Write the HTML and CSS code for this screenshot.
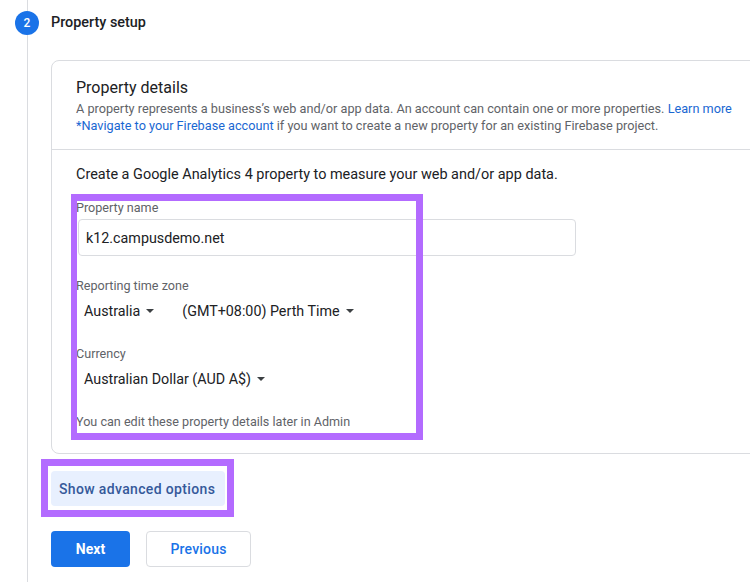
FILE: index.html
```html
<!DOCTYPE html>
<html lang="en">
<head>
<meta charset="utf-8">
<title>Property setup</title>
<link rel="stylesheet" href="styles.css">
</head>
<body>
<div class="stepper">
  <div class="rail">
    <div class="rail-top"></div>
    <div class="step-num">2</div>
    <div class="rail-line"></div>
  </div>
  <div class="main">
    <div class="step-title">Property setup</div>
    <div class="card">
      <div class="card-head">
        <div class="card-title">Property details</div>
        <p class="desc">A property represents a business’s web and/or app data. An account can contain one or more properties. <a class="link">Learn more</a></p>
        <p class="desc"><a class="link">*Navigate to your Firebase account</a> if you want to create a new property for an existing Firebase project.</p>
      </div>
      <div class="card-body">
        <div class="intro">Create a Google Analytics 4 property to measure your web and/or app data.</div>
        <div class="fields">
          <div class="label">Property name</div>
          <div class="input">k12.campusdemo.net</div>
          <div class="label label-gap">Reporting time zone</div>
          <div class="select-row">
            <div class="select">Australia <span class="caret"></span></div>
            <div class="select">(GMT+08:00) Perth Time <span class="caret"></span></div>
          </div>
          <div class="label label-gap2">Currency</div>
          <div class="select-row">
            <div class="select">Australian Dollar (AUD A$) <span class="caret"></span></div>
          </div>
          <div class="label note">You can edit these property details later in Admin</div>
          <div class="highlight highlight-fields"></div>
        </div>
      </div>
    </div>
    <div class="advanced-wrap">
      <button class="advanced">Show advanced options</button>
      <div class="highlight highlight-adv"></div>
    </div>
    <div class="actions">
      <button class="btn btn-primary">Next</button>
      <button class="btn btn-secondary">Previous</button>
    </div>
  </div>
</div>
</body>
</html>
```
FILE: styles.css
```css
html, body {
  margin: 0;
  padding: 0;
  background: #ffffff;
  overflow: hidden;
}
body {
  font-family: Roboto, "Liberation Sans", Arial, sans-serif;
  color: #202124;
  width: 750px;
  height: 582px;
}
.stepper {
  display: grid;
  grid-template-columns: 24px 1fr;
  column-gap: 12px;
  padding-left: 15px;
  height: 582px;
}
.rail {
  display: flex;
  flex-direction: column;
  align-items: flex-start;
}
.rail-top {
  width: 1px;
  height: 11px;
  margin-left: 12px;
  background: #dadce0;
}
.rail-line {
  width: 1px;
  flex: 1;
  margin-left: 12px;
  background: #dadce0;
}
.step-num {
  width: 24px;
  height: 24px;
  border-radius: 50%;
  background: #1a73e8;
  color: #ffffff;
  font-size: 12px;
  font-weight: 500;
  display: flex;
  align-items: center;
  justify-content: center;
}
.main {
  padding-top: 11px;
  min-width: 0;
}
.step-title {
  height: 24px;
  line-height: 24px;
  font-size: 14.4px;
  font-weight: 500;
  color: #202124;
}
.card {
  margin-top: 25px;
  margin-right: -12px;
  border: 1px solid #dadce0;
  border-radius: 8px;
}
.card-head {
  padding: 15px 24px;
  border-bottom: 1px solid #dadce0;
}
.card-title {
  font-size: 16px;
  line-height: 24px;
  color: #202124;
}
.desc {
  margin: 0;
  font-size: 12.7px;
  line-height: 17px;
  color: #5f6368;
  white-space: nowrap;
}
.link {
  color: #1967d2;
  text-decoration: none;
}
.card-body {
  padding: 15px 24px 23px;
}
.intro {
  font-size: 14.45px;
  line-height: 20px;
  color: #202124;
}
.fields {
  position: relative;
  margin-top: 15px;
}
.label {
  font-size: 12.6px;
  line-height: 16px;
  color: #5f6368;
}
.label-gap {
  margin-top: 22px;
}
.label-gap2 {
  margin-top: 18px;
}
.note {
  margin-top: 18px;
}
.input {
  margin: 3px 0 0 2px;
  width: 498px;
  height: 37px;
  box-sizing: border-box;
  border: 1px solid #dadce0;
  border-radius: 4px;
  padding-left: 7px;
  display: flex;
  align-items: center;
  font-size: 14.3px;
  color: #202124;
}
.select-row {
  display: flex;
  align-items: center;
  gap: 28px;
  height: 34px;
  padding-left: 8px;
}
.select {
  display: flex;
  align-items: center;
  gap: 6px;
  font-size: 14.3px;
  color: #202124;
}
.caret {
  width: 0;
  height: 0;
  border-left: 4px solid transparent;
  border-right: 4px solid transparent;
  border-top: 4px solid #3c4043;
}
.highlight {
  position: absolute;
  box-sizing: border-box;
  border: 7px solid #b36bff;
  pointer-events: none;
}
.highlight-fields {
  top: -6px;
  left: -5px;
  width: 352px;
  bottom: -10px;
  border-left-width: 6px;
}
.advanced-wrap {
  position: relative;
  display: inline-block;
  margin-top: 17px;
  vertical-align: top;
}
.advanced {
  display: block;
  width: 174px;
  height: 35px;
  padding: 0 8px;
  border: none;
  border-radius: 4px;
  background: #e8f0fe;
  color: #35599a;
  font-family: Roboto, "Liberation Sans", Arial, sans-serif;
  font-size: 14px;
  font-weight: 500;
  letter-spacing: 0.35px;
  text-align: left;
}
.highlight-adv {
  top: -12px;
  left: -10px;
  right: -9px;
  bottom: -11px;
}
.actions {
  display: flex;
  gap: 16px;
  margin-top: 25px;
}
.btn {
  height: 36px;
  border-radius: 4px;
  font-family: Roboto, "Liberation Sans", Arial, sans-serif;
  font-size: 14px;
  font-weight: 500;
  box-sizing: border-box;
}
.btn-primary {
  width: 79px;
  border: none;
  background: #1a73e8;
  color: #ffffff;
  font-weight: 700;
}
.btn-secondary {
  width: 105px;
  border: 1px solid #dadce0;
  background: #ffffff;
  color: #1a73e8;
  letter-spacing: 0.2px;
}
```
